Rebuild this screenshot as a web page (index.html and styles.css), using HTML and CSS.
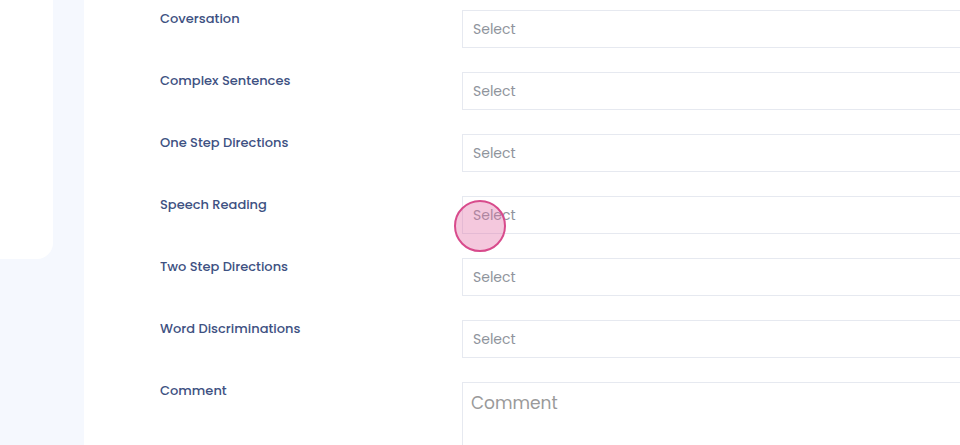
FILE: index.html
```html
<!DOCTYPE html>
<html lang="en">
<head>
<meta charset="utf-8">
<title>Assessment</title>
<link rel="stylesheet" href="styles.css">
</head>
<body>
<div class="layout">
  <aside class="side">
    <div class="side-card"></div>
  </aside>
  <main class="panel">
    <div class="form">
      <div class="row"><label class="label">Coversation</label><div class="field">Select</div></div>
      <div class="row"><label class="label">Complex Sentences</label><div class="field">Select</div></div>
      <div class="row"><label class="label">One Step Directions</label><div class="field">Select</div></div>
      <div class="row"><label class="label">Speech Reading</label><div class="field">Select</div></div>
      <div class="row"><label class="label">Two Step Directions</label><div class="field">Select</div></div>
      <div class="row"><label class="label">Word Discriminations</label><div class="field">Select</div></div>
      <div class="row"><label class="label">Comment</label><div class="field area">Comment</div></div>
    </div>
  </main>
</div>
<div class="tap"></div>
</body>
</html>
```
FILE: styles.css
```css
html, body {
  margin: 0;
  padding: 0;
  height: 100%;
  overflow: hidden;
}
body {
  background: #f5f8fe;
  font-family: "Poppins", "Open Sans", "Liberation Sans", sans-serif;
}
.layout {
  display: grid;
  grid-template-columns: 53px 1fr;
  column-gap: 31px;
  height: 100%;
}
.side-card {
  height: 259px;
  background: #ffffff;
  border-bottom-right-radius: 16px;
}
.panel {
  background: #ffffff;
  padding: 10px 0 0 76px;
  min-width: 900px;
}
.form {
  display: flex;
  flex-direction: column;
  gap: 24px;
}
.row {
  display: flex;
  align-items: flex-start;
}
.label {
  width: 302px;
  flex: none;
  font-size: 13px;
  line-height: 18px;
  font-weight: 500;
  color: #3e5182;
}
.field {
  width: 560px;
  height: 36px;
  box-sizing: content-box;
  border: 1px solid #e6e9f0;
  padding-left: 10px;
  font-size: 14px;
  line-height: 36px;
  color: #8f949c;
}
.field.area {
  height: 120px;
  line-height: 22px;
  padding-top: 9px;
  padding-left: 8px;
  font-size: 17px;
  color: #9a9a9a;
}
.tap {
  position: absolute;
  left: 454px;
  top: 200px;
  width: 48px;
  height: 48px;
  border-radius: 50%;
  border: 2px solid #d84b8c;
  background: rgba(226, 110, 165, 0.38);
}
```
